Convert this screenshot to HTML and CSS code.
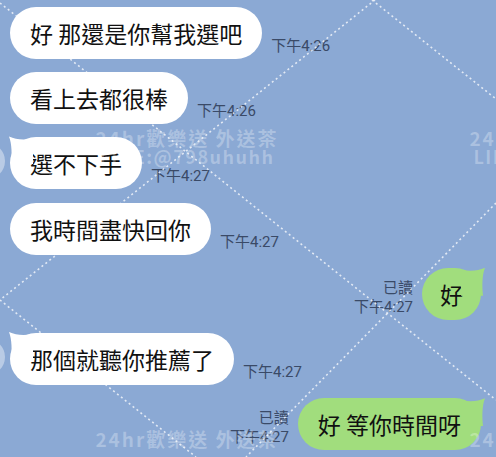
FILE: index.html
```html
<!DOCTYPE html>
<html lang="zh-Hant">
<head>
<meta charset="utf-8">
<title>Chat</title>
<link rel="stylesheet" href="styles.css">
</head>
<body>
<div class="screen">
  <div class="chat">
    <div class="row in">
      <div class="bubble">好 那還是你幫我選吧</div>
      <div class="meta"><span class="time">下午4:26</span></div>
    </div>
    <div class="row in">
      <div class="bubble">看上去都很棒</div>
      <div class="meta"><span class="time">下午4:26</span></div>
    </div>
    <div class="row in">
      <div class="avatar"></div>
      <div class="bubble tail-l">選不下手</div>
      <div class="meta"><span class="time">下午4:27</span></div>
    </div>
    <div class="row in">
      <div class="bubble">我時間盡快回你</div>
      <div class="meta"><span class="time">下午4:27</span></div>
    </div>
    <div class="row out">
      <div class="meta"><span class="read">已讀</span><span class="time">下午4:27</span></div>
      <div class="bubble green tail-r single">好</div>
    </div>
    <div class="row in">
      <div class="avatar"></div>
      <div class="bubble tail-l">那個就聽你推薦了</div>
      <div class="meta"><span class="time">下午4:27</span></div>
    </div>
    <div class="row out">
      <div class="meta"><span class="read">已讀</span><span class="time">下午4:27</span></div>
      <div class="bubble green tail-r">好 等你時間呀</div>
    </div>
  </div>

  <svg class="overlay" viewBox="0 0 496 457" width="496" height="457" aria-hidden="true">
    <g class="dots">
      <line x1="0" y1="3" x2="496" y2="400"/>
      <line x1="0" y1="300" x2="196" y2="457"/>
      <line x1="372" y1="0" x2="496" y2="99"/>
      <line x1="375" y1="0" x2="0" y2="300"/>
      <line x1="496" y1="203" x2="246" y2="457"/>
    </g>
    <g class="wm">
      <text x="187" y="146">24hr歡樂送 外送茶</text>
      <text x="187" y="164" class="sub">LINE:@798uhuhh</text>
      <text x="561" y="146">24hr歡樂送 外送茶</text>
      <text x="561" y="164" class="sub">LINE:@798uhuhh</text>
      <text x="187" y="447">24hr歡樂送 外送茶</text>
      <text x="561" y="447">24hr歡樂送 外送茶</text>
    </g>
  </svg>
</div>
</body>
</html>
```
FILE: styles.css
```css
html, body {
  margin: 0;
  padding: 0;
}
body {
  background: #8ba9d4;
  font-family: "Noto Sans CJK TC", "Noto Sans", sans-serif;
  overflow: hidden;
}
.screen {
  position: relative;
  width: 496px;
  height: 457px;
  overflow: hidden;
}
.chat {
  display: flex;
  flex-direction: column;
  gap: 13.2px;
  padding-top: 7px;
}
.row {
  display: flex;
  align-items: flex-end;
  gap: 9px;
  height: 52px;
}
.row.in {
  padding-left: 10px;
}
.row.out {
  justify-content: flex-end;
  padding-right: 15px;
}
.avatar {
  align-self: flex-start;
  width: 36px;
  height: 36px;
  margin: 6px -4px 0 -41px;
  border-radius: 50%;
  background: rgba(255, 255, 255, 0.4);
  flex: none;
}
.bubble {
  position: relative;
  height: 52px;
  line-height: 52px;
  padding: 0 20px;
  border-radius: 26px;
  background: #fff;
  color: #111;
  font-size: 23px;
  white-space: nowrap;
  flex: none;
}
.bubble.green {
  background: #a1dd7d;
}
.bubble.single {
  padding: 0 18px;
}
.tail-l::before {
  content: "";
  position: absolute;
  left: -1px;
  top: -1px;
  width: 24px;
  height: 28px;
  background: inherit;
  clip-path: path('M0 0 C7 3 14 4 24 2 L24 28 L2 28 C3 18 3 8 0 0 Z');
}
.tail-r::before {
  content: "";
  position: absolute;
  right: -4px;
  top: 0;
  width: 24px;
  height: 28px;
  background: inherit;
  clip-path: path('M24 0 C17 3 10 4 0 2 L0 28 L22 28 C21 18 21 8 24 0 Z');
}
.meta {
  display: flex;
  flex-direction: column;
  align-items: flex-end;
  margin-bottom: 4px;
  color: #3a4a67;
  font-family: "Roboto", "Noto Sans CJK TC", sans-serif;
  font-size: 15px;
  line-height: 18px;
  white-space: nowrap;
}
.read {
  margin-bottom: 1px;
}
.overlay {
  position: absolute;
  left: 0;
  top: 0;
  pointer-events: none;
}
.dots line {
  stroke: rgba(255, 255, 255, 0.75);
  stroke-width: 1.6;
  stroke-dasharray: 2 3;
}
.wm text {
  fill: rgba(255, 255, 255, 0.28);
  font-family: "Noto Sans CJK TC", sans-serif;
  font-weight: 700;
  font-size: 19px;
  letter-spacing: 2px;
  text-anchor: middle;
}
.wm text.sub {
  font-size: 18px;
  letter-spacing: 1.5px;
}
```
